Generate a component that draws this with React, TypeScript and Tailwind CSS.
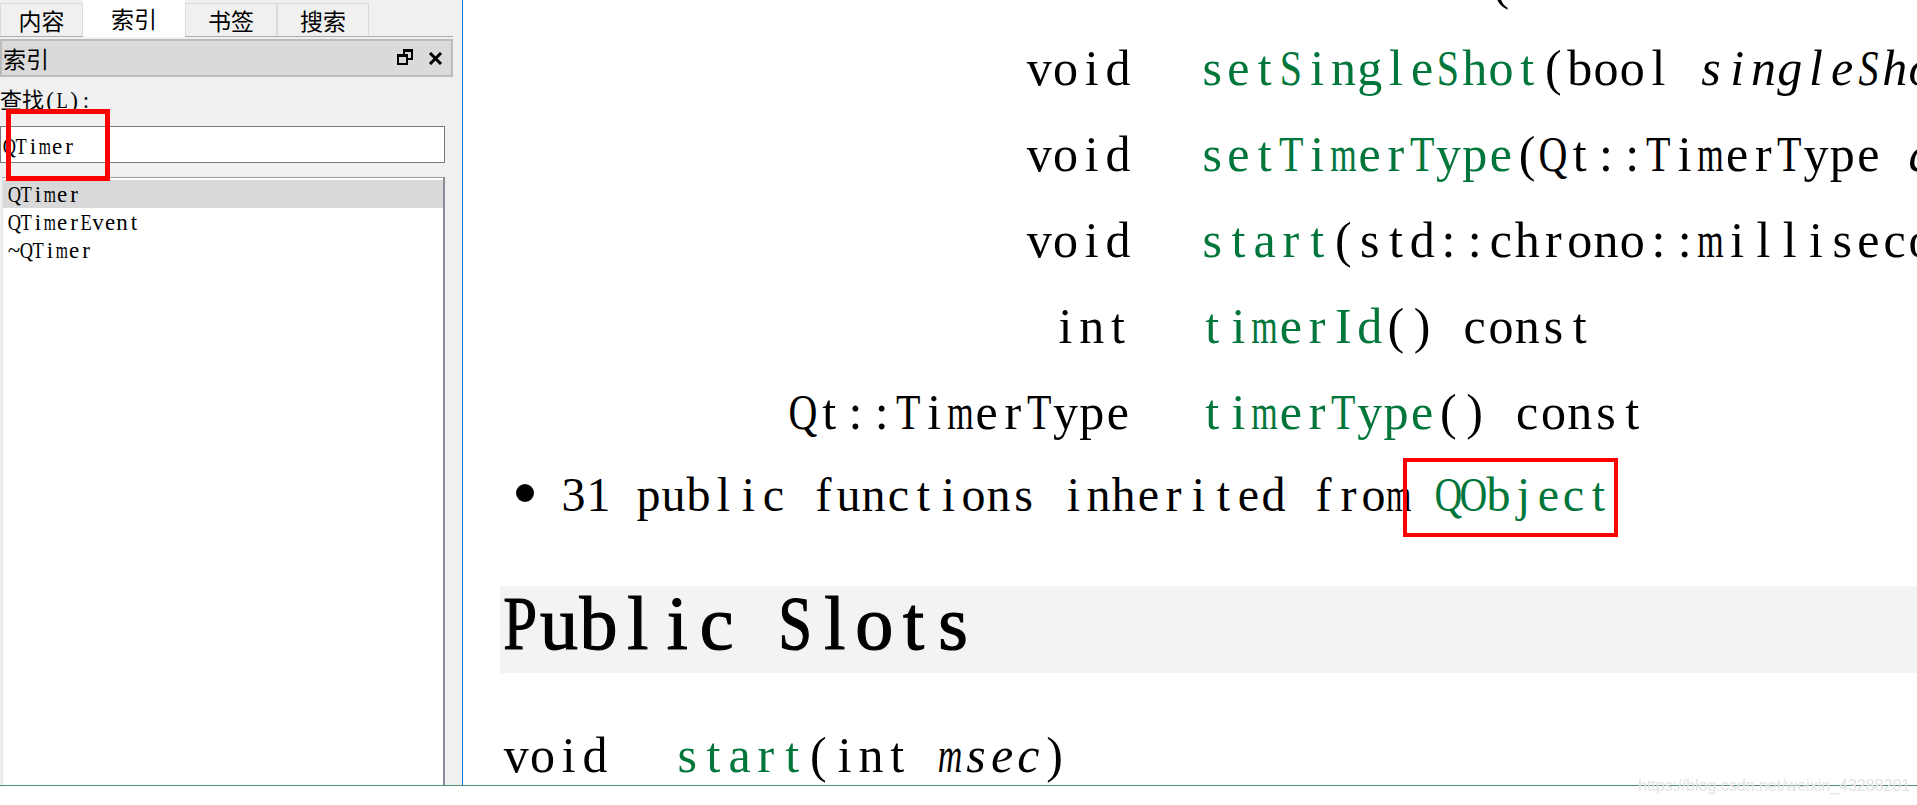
import React from 'react';

// SimSun-like look: serif glyphs centred in fixed-width cells
type MonoSize = 'row' | 'bullet' | 'head' | 'small';

const cellClass: Record<MonoSize, string> = {
    row: 'w-[26.25px]',
    bullet: 'w-[25px]',
    head: 'w-[39.4px]',
    small: 'w-[12px]',
};

const glyphScale = (ch: string) => {
    if ('mwMW'.includes(ch)) return 'inline-block shrink-0 scale-x-[0.68]';
    if (/[A-Z]/.test(ch) && !'IJ'.includes(ch)) return 'inline-block shrink-0 scale-x-[0.8]';
    return '';
};

const Mono: React.FC<{ text: string; size: MonoSize }> = ({ text, size }) => (
    <>
        {Array.from(text).map((ch, i) => {
            const scale = glyphScale(ch);
            return (
                <span key={i} className={`inline-flex justify-center whitespace-pre ${cellClass[size]}`}>
                    {scale ? <span className={scale}>{ch}</span> : <span className="shrink-0">{ch}</span>}
                </span>
            );
        })}
    </>
);

interface MemberRow {
    type: string;
    name: string;
    args: string;
    param?: string;
    tail: string;
}

const members: MemberRow[] = [
    { type: 'void', name: 'setInterval', args: '(std::chrono::milliseconds ', param: 'value', tail: ')' },
    { type: 'void', name: 'setSingleShot', args: '(bool ', param: 'singleShot', tail: ')' },
    { type: 'void', name: 'setTimerType', args: '(Qt::TimerType ', param: 'atype', tail: ')' },
    { type: 'void', name: 'start', args: '(std::chrono::milliseconds ', param: 'msec', tail: ')' },
    { type: 'int', name: 'timerId', args: '() const', tail: '' },
    { type: 'Qt::TimerType', name: 'timerType', args: '() const', tail: '' },
];

const tabs = [
    { label: '内容', width: 'w-[83px]' },
    { label: '索引', width: 'w-[102px]', active: true },
    { label: '书签', width: 'w-[92px]' },
    { label: '搜索', width: 'w-[92px]' },
];

const results = ['QTimer', 'QTimerEvent', '~QTimer'];

const RestoreIcon = () => (
    <svg width="16" height="16" viewBox="0 0 16 16">
        <rect x="7" y="1" width="8" height="9" fill="none" stroke="#000" strokeWidth="2" />
        <rect x="6" y="0" width="10" height="3" fill="#000" />
        <rect x="1" y="6" width="9" height="9" fill="#dadada" stroke="#000" strokeWidth="2" />
        <rect x="0" y="5" width="11" height="3" fill="#000" />
    </svg>
);

const CloseIcon = () => (
    <svg width="15" height="13" viewBox="0 0 15 13">
        <path d="M2 1 L13 12 M13 1 L2 12" stroke="#000" strokeWidth="3" />
    </svg>
);

const IndexPanel: React.FC = () => (
    <div className="w-[463px] shrink-0 h-full bg-[#f0f0f0] border-r border-[#0078d7] flex flex-col font-['Noto_Sans_CJK_SC',sans-serif] text-black">
        {/* tab strip */}
        <div className="w-[453px] h-[37px] flex items-end border-b border-[#adadad]">
            {tabs.map(tab =>
                tab.active ? (
                    <div
                        key={tab.label}
                        className={`${tab.width} h-[38px] -mb-px bg-white flex items-center justify-center text-[23px]`}
                    >
                        {tab.label}
                    </div>
                ) : (
                    <div
                        key={tab.label}
                        className={`${tab.width} h-[33px] bg-[#f0f0f0] border border-b-0 border-[#dadada] flex items-center justify-center text-[23px]`}
                    >
                        {tab.label}
                    </div>
                )
            )}
        </div>

        {/* dock title */}
        <div className="mt-[2px] w-[453px] h-[38px] border-2 border-[#bcbcbc] bg-[#dadada] flex items-center">
            <span className="pl-[1px] text-[23px] leading-none flex-1">索引</span>
            <span className="flex items-center mt-[-2px]"><RestoreIcon /></span>
            <span className="ml-[15px] mr-[8px] flex items-center"><CloseIcon /></span>
        </div>

        {/* search */}
        <div className="mt-[5px] h-[32px] leading-[32px] text-[22px] whitespace-nowrap">
            查找<span className="font-['Liberation_Serif',serif] text-[23px]"><Mono text="(L):" size="small" /></span>
        </div>
        <div className="mt-[12px] w-[445px] h-[37px] bg-white border border-[#7a7a7a] overflow-hidden">
            <div className="pt-[5px] pl-[2px] leading-[30px] text-[23px] font-['Liberation_Serif',serif] whitespace-nowrap">
                <Mono text="QTimer" size="small" />
            </div>
        </div>

        {/* result list */}
        <div className="mt-[14px] ml-[2px] w-[443px] flex-1 bg-white border-t border-l border-t-[#a0a0a0] border-l-[#e3e3e3] border-r-2 border-r-[#8b8b96] pt-[2px] font-['Liberation_Serif',serif] text-[23px]">
            {results.map((item, i) => (
                <div
                    key={item}
                    className={`h-[28px] pt-[2px] leading-[25px] pl-[5px] whitespace-nowrap ${i === 0 ? 'bg-[#d9d9d9]' : ''}`}
                >
                    <Mono text={item} size="small" />
                </div>
            ))}
        </div>
    </div>
);

const DocView: React.FC = () => (
    <div className="flex-1 h-full bg-white overflow-hidden text-black font-['Liberation_Serif',serif]">
        <div className="-mt-[61px] grid grid-cols-[668px_max-content] auto-rows-[86px] gap-x-[68px] text-[50px] leading-[86px] whitespace-nowrap">
            {members.map(m => (
                <React.Fragment key={m.name + m.type}>
                    <div className="text-right"><Mono text={m.type} size="row" /></div>
                    <div>
                        <span className="text-[#00763a]"><Mono text={m.name} size="row" /></span>
                        <Mono text={m.args} size="row" />
                        {m.param && <i><Mono text={m.param} size="row" /></i>}
                        <Mono text={m.tail} size="row" />
                    </div>
                </React.Fragment>
            ))}
        </div>

        <div className="mt-[10px] h-[60px] flex items-center whitespace-nowrap">
            <span className="ml-[53px] mb-[4px] w-[18px] h-[18px] rounded-full bg-black shrink-0" />
            <span className="ml-[27px] text-[48px] leading-[60px]">
                <Mono text="31 public functions inherited from " size="bullet" />
                <span className="text-[#00763a]"><Mono text="QObject" size="bullet" /></span>
            </span>
        </div>

        <h2 className="mt-[61px] ml-[37px] h-[87px] bg-[#f2f3f4] text-[76px] leading-[75px] font-normal [-webkit-text-stroke:1.2px_#000] whitespace-nowrap">
            <Mono text="Public Slots" size="head" />
        </h2>

        <div className="mt-[39px] ml-[40px] h-[86px] text-[50px] leading-[86px] whitespace-nowrap">
            <Mono text="void" size="row" />
            <span className="ml-[66px] text-[#00763a]"><Mono text="start" size="row" /></span>
            <Mono text="(int " size="row" />
            <i><Mono text="msec" size="row" /></i>
            <Mono text=")" size="row" />
        </div>
    </div>
);

export default function App() {
    return (
        <div className="relative w-full h-[805px] bg-white overflow-hidden">
            <div className="flex h-[786px] border-b border-[#4f8f76]">
                <IndexPanel />
                <DocView />
            </div>

            {/* annotation boxes */}
            <div className="absolute left-[6px] top-[109px] w-[104px] h-[72px] border-[5px] border-[#ff0000]" />
            <div className="absolute left-[1403px] top-[458px] w-[215px] h-[79px] border-[4px] border-[#ff0000]" />

            <div className="absolute left-[1638px] top-[776px] text-[16px] leading-[20px] text-[#e4e4e4] font-['Liberation_Sans',sans-serif] whitespace-nowrap">
                https://blog.csdn.net/weixin_43288201
            </div>
        </div>
    );
}
